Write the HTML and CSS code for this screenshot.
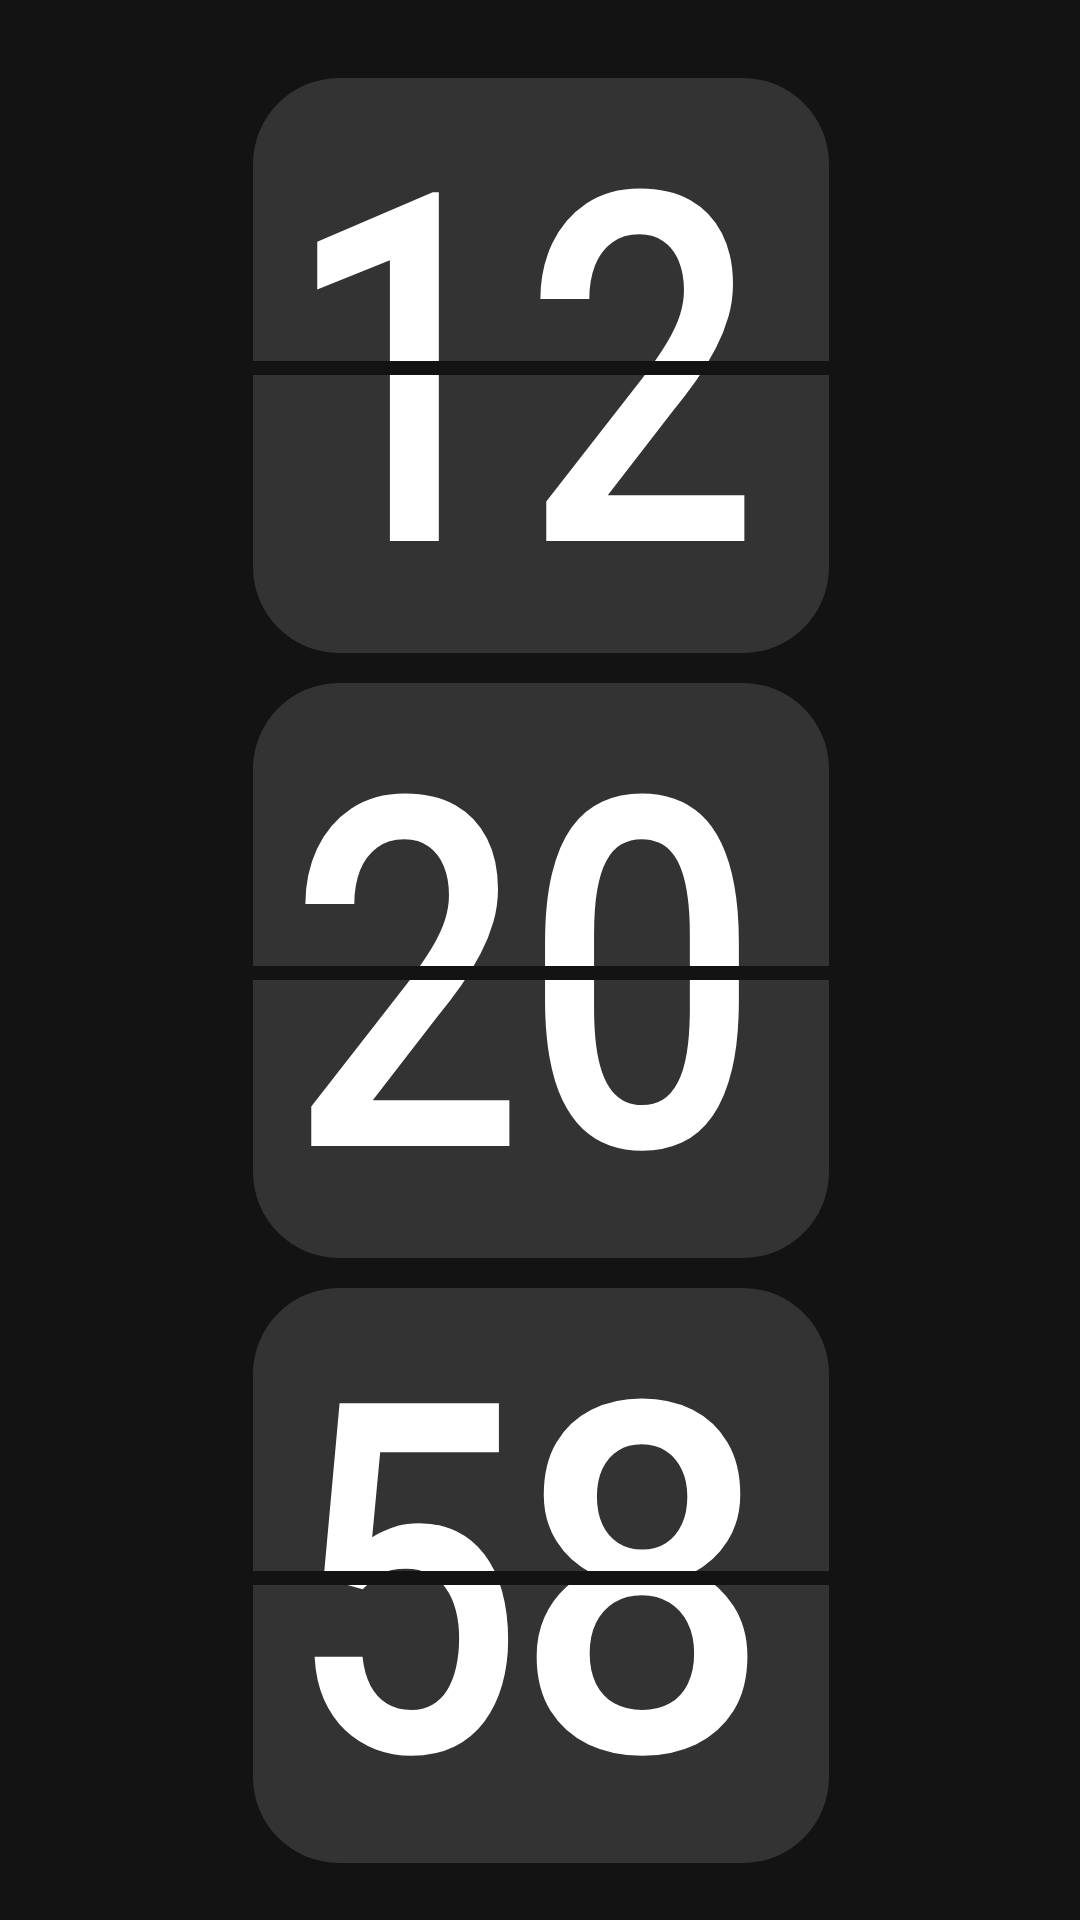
FILE: index.html
```html
<!DOCTYPE html>
<html lang="en">
<head>
<meta charset="utf-8">
<title>Flip Clock</title>
<link rel="stylesheet" href="styles.css">
</head>
<body>
<main class="clock">
  <div class="card">
    <div class="digits"><span class="cell"><span class="digit one">1</span></span><span class="cell"><span class="digit">2</span></span></div>
    <div class="split"></div>
  </div>
  <div class="card">
    <div class="digits"><span class="cell"><span class="digit">2</span></span><span class="cell"><span class="digit">0</span></span></div>
    <div class="split"></div>
  </div>
  <div class="card">
    <div class="digits"><span class="cell"><span class="digit">5</span></span><span class="cell"><span class="digit wide">8</span></span></div>
    <div class="split"></div>
  </div>
</main>
</body>
</html>
```
FILE: styles.css
```css
html, body {
  margin: 0;
  padding: 0;
  background: #141314;
}

.clock {
  display: flex;
  flex-direction: column;
  align-items: center;
  gap: 30px;
  padding: 78px 0 0 2px;
}

.card {
  position: relative;
  width: 576px;
  height: 575px;
  border-radius: 86px;
  background: #333333;
  overflow: hidden;
}

.digits {
  display: flex;
  justify-content: center;
  padding: 8px 76px 0 0;
  height: 567px;
  font-family: Roboto, "Noto Sans", sans-serif;
  font-weight: 500;
  font-size: 489px;
  line-height: 575px;
  color: #ffffff;
}

.cell {
  display: block;
  width: 235px;
  text-align: center;
}

.digit {
  display: inline-block;
  transform: scaleX(0.85);
  transform-origin: 50% 50%;
}

.digit.one {
  margin-left: -6px;
}

.digit.wide {
  transform: scaleX(0.92);
}

.split {
  position: absolute;
  left: 0;
  right: 0;
  top: 283px;
  height: 14px;
  background: #141314;
}
```
